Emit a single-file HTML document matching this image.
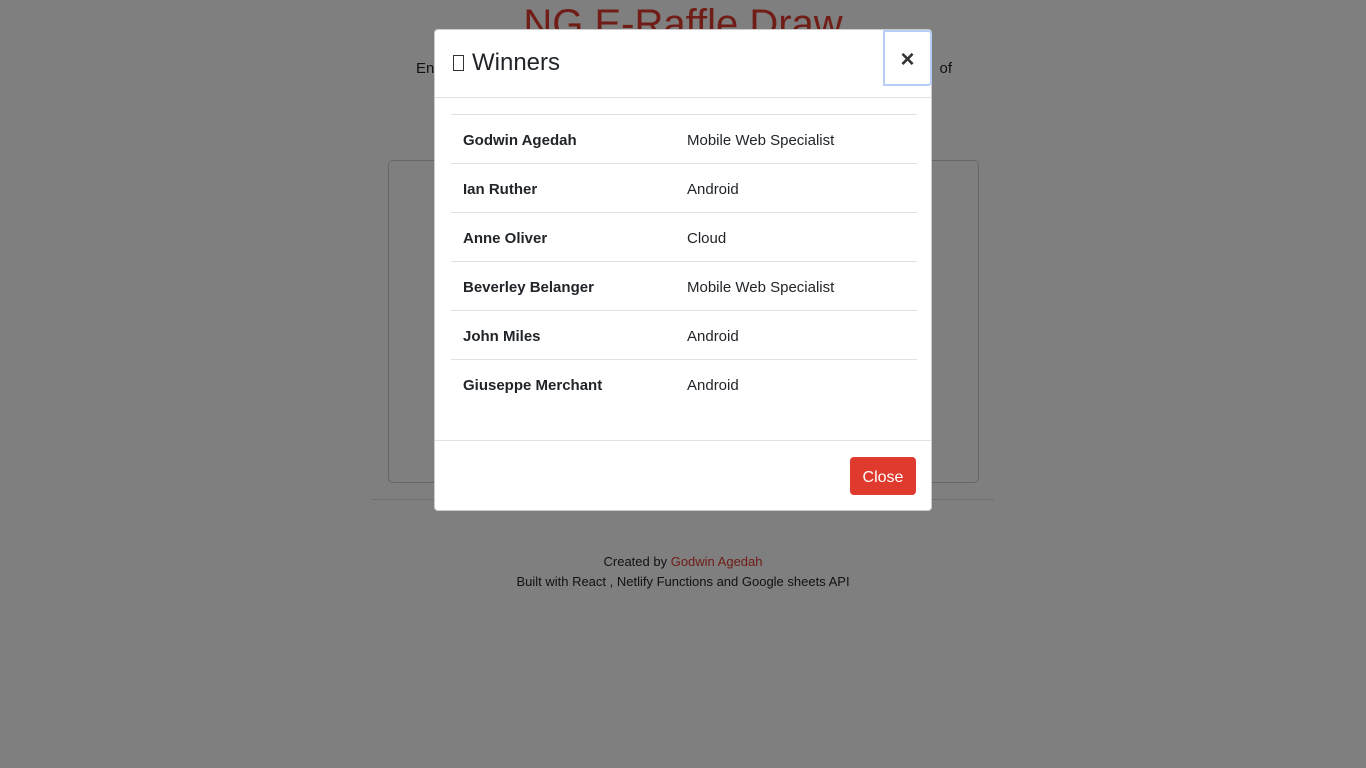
<!DOCTYPE html>
<html><head><meta charset="utf-8"><style>
*{box-sizing:border-box;margin:0;padding:0}
body{width:1366px;height:768px;background:#fff;font-family:"Liberation Sans","DejaVu Sans",sans-serif;position:relative;overflow:hidden;color:#212529}
.abs{position:absolute}
h1{position:absolute;top:2px;left:0;width:1366px;text-align:center;font-weight:normal;font-size:40px;color:#e03a2e}
.sub{top:60px;left:416px;width:536px;font-size:15px;display:flex;justify-content:space-between}
.card{left:388px;top:160px;width:591px;height:323px;border:1px solid #ccc;border-radius:5px}
.hr{left:372px;top:499px;width:622px;border-top:1px solid #ddd}
.foot{top:552px;left:0;width:1366px;text-align:center;font-size:13px;line-height:20px}
.foot span{color:#e03a2e}
.ov{left:0;top:0;width:1366px;height:768px;background:rgba(0,0,0,.5)}
.modal{left:434px;top:29px;width:498px;height:482px;background:#fff;border-radius:4px;border:1px solid rgba(0,0,0,.2)}
.title{left:18px;top:19px;font-size:24px;color:#212529}
.box{display:inline-block;width:11px;height:16px;border:1px solid #333;margin-right:8px;vertical-align:-1px}
.x{left:448px;top:0;width:49px;height:56px;border:2px solid #b8cdf5;border-radius:0 4px 4px 0;font-size:24px;text-align:center;line-height:56px;color:#333;font-weight:bold}
.hb{left:0;top:67px;width:496px;border-top:1px solid #dee2e6}
table{position:absolute;left:16px;top:84px;width:466px;border-collapse:collapse;font-size:15px}
td{border-top:1px solid #dee2e6;height:49px;padding:2px 12px 0;vertical-align:middle}
td:first-child{font-weight:bold;width:224px}
.fb{left:0;top:410px;width:496px;border-top:1px solid #dee2e6}
.btn{left:415px;top:427px;width:66px;height:38px;background:#e03a2e;color:#fff;border-radius:4px;font-size:16px;text-align:center;line-height:42px}
</style></head><body>
<h1>NG E-Raffle Draw</h1>
<div class="abs sub"><span>Enter the raffle draw and stand a chance to win</span><span>of</span></div>
<div class="abs card"></div>
<div class="abs hr"></div>
<div class="abs foot">Created by <span>Godwin Agedah</span><br>Built with React , Netlify Functions and Google sheets API</div>
<div class="abs ov"></div>
<div class="abs modal">
<div class="abs title"><span class="box"></span>Winners</div>
<div class="abs x">×</div>
<div class="abs hb"></div>
<table>
<tr><td>Godwin Agedah</td><td>Mobile Web Specialist</td></tr>
<tr><td>Ian Ruther</td><td>Android</td></tr>
<tr><td>Anne Oliver</td><td>Cloud</td></tr>
<tr><td>Beverley Belanger</td><td>Mobile Web Specialist</td></tr>
<tr><td>John Miles</td><td>Android</td></tr>
<tr><td>Giuseppe Merchant</td><td>Android</td></tr>
</table>
<div class="abs fb"></div>
<div class="abs btn">Close</div>
</div>
</body></html>
